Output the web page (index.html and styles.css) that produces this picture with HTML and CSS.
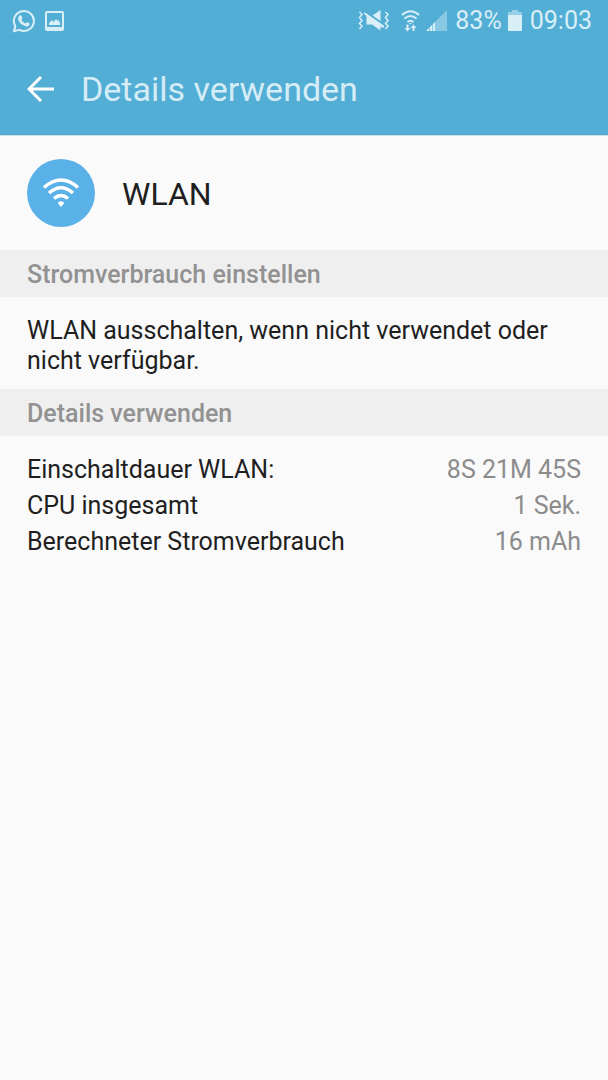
FILE: index.html
```html
<!DOCTYPE html>
<html lang="de">
<head>
<meta charset="utf-8">
<meta name="viewport" content="width=device-width, initial-scale=1">
<title>Details verwenden</title>
<link rel="stylesheet" href="styles.css">
</head>
<body>
<header class="top">
  <div class="status">
    <div class="status-group notifications">
      <svg width="24" height="24" viewBox="0 0 24 24" fill="none" stroke="currentColor">
        <path d="M3.3 17.1A10 10 0 1 1 7.2 20.8L2 22.2Z" stroke-width="2"/>
        <path d="M7.4 6.8c.7-.8 1.8-.6 2.1.1l.8 2c.2.7-.2 1.1-.9 1.9.9 1.8 2.1 2.9 4 3.7.8-.8 1.2-1.5 1.8-1.3l2.200 1.100c.7.4.2 1.900-.8 2.600-1.600 1.200-4.300.4-6.600-1.300C7 13.300 4.600 9.600 7.400 6.800Z" fill="currentColor" stroke="none"/>
      </svg>
      <svg width="20" height="20" viewBox="0 0 20 20">
        <path fill="currentColor" fill-rule="evenodd" d="M2 0H17Q19 0 19 2V18Q19 20 17 20H2Q0 20 0 18V2Q0 0 2 0ZM2 2V16H17V2ZM4 14V12L7 9 8.500 11 11 8 12.500 10 13.500 9 15 12V14Z"/>
      </svg>
    </div>
    <div class="status-group system">
      <svg class="mute" width="32" height="22" viewBox="0 0 32 22" fill="none" stroke="currentColor">
        <path fill="currentColor" stroke="none" d="M5.500 3.500 7 2.500 26.500 16 25 18 22.500 16.500V20.500L14 14.500H8.500V6ZM14.500 5.500 22.500 0V11Z"/>
        <path d="M1.500 2 4 4.500 1.500 7.500 4 10.500 1.500 13.500 4 16 1.500 19M27.500 2 30 4.500 27.500 7.500 30 10.500 27.500 13.500 30 16 27.500 19" stroke-width="1.500"/>
      </svg>
      <svg class="wifi-small" width="20" height="22" viewBox="0 0 20 22" fill="none" stroke="currentColor" stroke-width="2">
        <path d="M1 5Q9.500-2.500 18 5M3.500 8.500Q9.500 3.500 15.500 8.500M6.500 12Q9.500 9.500 12.500 12"/>
        <path fill="currentColor" stroke="none" d="M8 13H11L9.500 14.500ZM5.500 14.500H7.500V18H9.500L6.500 21.500 3.500 18H5.500ZM11.500 21V18H9.500L12.500 14.500 15.500 18H13.500V21Z"/>
      </svg>
      <svg class="signal" width="21" height="22" viewBox="0 0 21 22" fill="currentColor">
        <path opacity=".4" d="M0 21 21 0V21Z"/>
        <path d="M0 21 3 18V21ZM4 21V17L6 15V21ZM7 21V14L9 12V21Z"/>
      </svg>
      <span>83%</span>
      <svg class="battery" width="14" height="22" viewBox="0 0 14 22" fill="currentColor">
        <path opacity=".5" d="M4 0H10V2H14V5H0V2H4Z"/>
        <path d="M0 5H14V20Q14 21 13 21H1Q0 21 0 20Z"/>
      </svg>
      <time>09:03</time>
    </div>
  </div>
  <div class="bar">
    <button class="back" type="button" aria-label="Zurück">
      <svg width="28" height="28" viewBox="0 0 28 28" fill="none" stroke="currentColor" stroke-width="3">
        <path d="M14 1 2 13 14 25M2 13H27"/>
      </svg>
    </button>
    <h1 class="title">Details verwenden</h1>
  </div>
</header>
<main>
  <section class="app">
    <span class="app-icon">
      <svg width="38" height="30" viewBox="0 0 38 30" fill="none" stroke="currentColor" stroke-width="3.500">
        <path d="M2 9.500Q19-5.500 36 9.500M7 15Q19 4.500 31 15M12 20.500Q19 14.500 26 20.500"/>
        <path fill="currentColor" stroke="none" d="M16 25.500C16 22.500 22 22.500 22 25.500L19 29Z"/>
      </svg>
    </span>
    <h2 class="app-name">WLAN</h2>
  </section>
  <h3 class="band">Stromverbrauch einstellen</h3>
  <p class="note">WLAN ausschalten, wenn nicht verwendet oder nicht verfügbar.</p>
  <h3 class="band">Details verwenden</h3>
  <table class="details">
    <tr><th scope="row">Einschaltdauer WLAN:</th><td>8S 21M 45S</td></tr>
    <tr><th scope="row">CPU insgesamt</th><td>1 Sek.</td></tr>
    <tr><th scope="row">Berechneter Stromverbrauch</th><td>16 mAh</td></tr>
  </table>
</main>
</body>
</html>
```
FILE: styles.css
```css
* {
  box-sizing: border-box;
}

body {
  margin: 0;
  background: #fafafa;
  color: #1f1f1f;
  font: 400 25px/30px Roboto, sans-serif;
}

h1, h2, h3, p {
  margin: 0;
}

svg {
  display: block;
  flex: none;
}

.top {
  background: #52aed5;
  border-bottom: 1px solid #cfdfe6;
}

.status {
  display: flex;
  justify-content: space-between;
  align-items: center;
  height: 42px;
  padding: 0 16px 0 12px;
  color: #d9eff8;
}

.status-group {
  display: flex;
  align-items: center;
}

.notifications {
  gap: 9px;
}

.mute {
  margin-right: 11px;
}

.wifi-small {
  margin-right: 5px;
}

.signal {
  margin-right: 8px;
}

.battery {
  margin: 0 8px 0 6px;
}

.bar {
  display: flex;
  align-items: center;
  gap: 26px;
  padding: 27px 27px 25px;
}

.back {
  padding: 0;
  border: 0;
  background: none;
  color: #fff;
}

.title {
  color: #d5ecf6;
  font-size: 34px;
  font-weight: 400;
  line-height: 41px;
}

.app {
  display: flex;
  align-items: center;
  gap: 27px;
  padding: 23px 27px;
}

.app-icon {
  display: grid;
  place-items: center;
  width: 68px;
  height: 68px;
  border-radius: 50%;
  background: #5ab1e8;
  color: #fff;
}

.app-name {
  padding-top: 2px;
  font-size: 32px;
  font-weight: 400;
}

.band {
  padding: 10px 27px 7px;
  background: #efefef;
  color: #929292;
  font-size: 25px;
  font-weight: 500;
}

.note {
  padding: 19px 27px 13px;
}

.details {
  width: 100%;
  padding: 16px 27px;
  border-spacing: 0;
  line-height: 36px;
}

.details th,
.details td {
  padding: 0;
  font-weight: 400;
  text-align: left;
}

.details td {
  color: #8c8c8c;
  text-align: right;
}
```
